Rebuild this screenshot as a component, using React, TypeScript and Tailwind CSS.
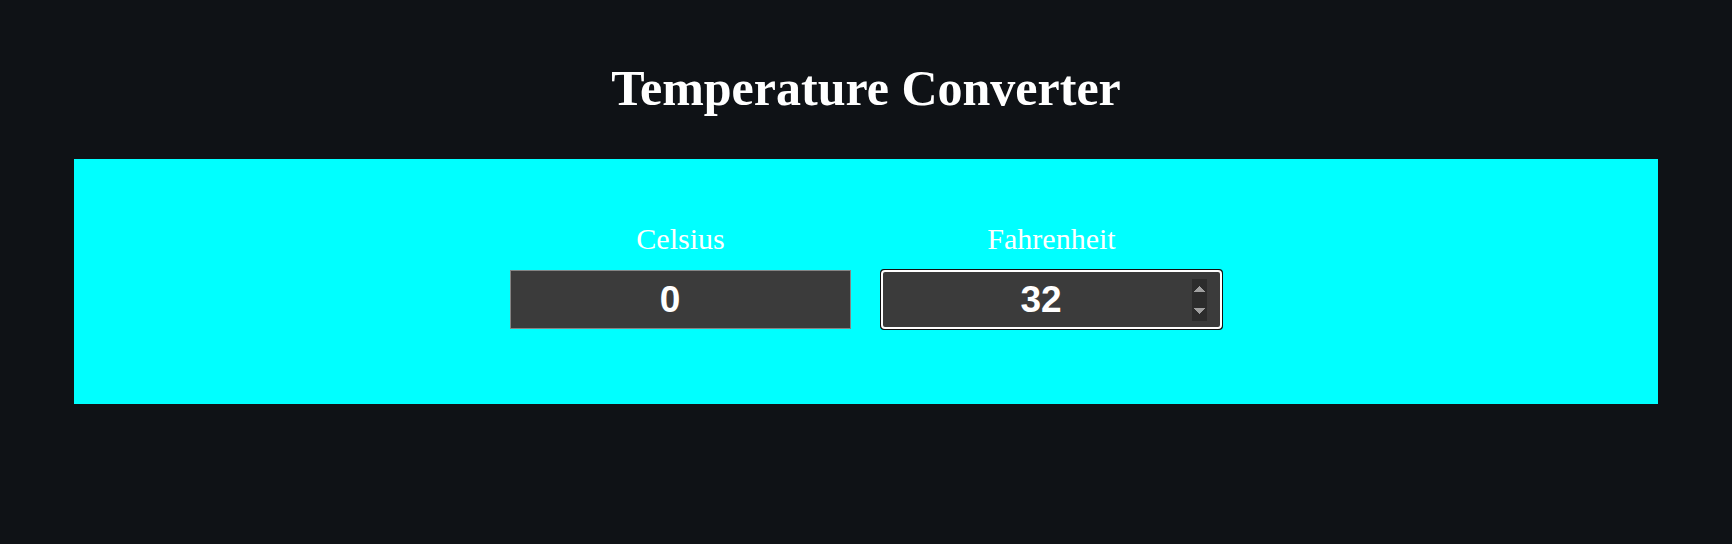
import { useState } from "react";

export default function App() {
  const [celsius, setCelsius] = useState("0");
  const [fahrenheit, setFahrenheit] = useState("32");

  const onCelsius = (v: string) => {
    setCelsius(v);
    const n = parseFloat(v);
    setFahrenheit(isNaN(n) ? "" : String(Math.round((n * 9) / 5 + 32)));
  };

  const onFahrenheit = (v: string) => {
    setFahrenheit(v);
    const n = parseFloat(v);
    setCelsius(isNaN(n) ? "" : String(Math.round(((n - 32) * 5) / 9)));
  };

  return (
    <div className="min-h-[544px] bg-[#0f1216] [color-scheme:dark] px-[74px] pt-[61px] pb-10 font-['Liberation_Serif',serif] text-white">
      <h1 className="text-center text-[50px] font-bold leading-[55px]">Temperature Converter</h1>

      <div className="mt-[43px] flex h-[245px] items-start justify-center gap-[30px] bg-[#00ffff] pt-[63px]">
        <div className="flex flex-col items-center">
          <label className="text-[30px] leading-[34px]">Celsius</label>
          <input
            type="number"
            value={celsius}
            onChange={(e) => onCelsius(e.target.value)}
            className="mt-[14px] h-[59px] w-[341px] border border-[#858585] bg-[#3b3b3b] pl-[8px] pr-[14px] text-center font-['Liberation_Sans',sans-serif] text-[37px] font-bold text-white"
          />
        </div>

        <div className="flex flex-col items-center">
          <label className="text-[30px] leading-[34px]">Fahrenheit</label>
          <input
            type="number"
            autoFocus
            value={fahrenheit}
            onChange={(e) => onFahrenheit(e.target.value)}
            className="mt-[14px] h-[59px] w-[341px] rounded-[2px] border border-[#858585] bg-[#3b3b3b] pl-[8px] pr-[14px] text-center font-['Liberation_Sans',sans-serif] text-[37px] font-bold text-white"
          />
        </div>
      </div>
    </div>
  );
}
